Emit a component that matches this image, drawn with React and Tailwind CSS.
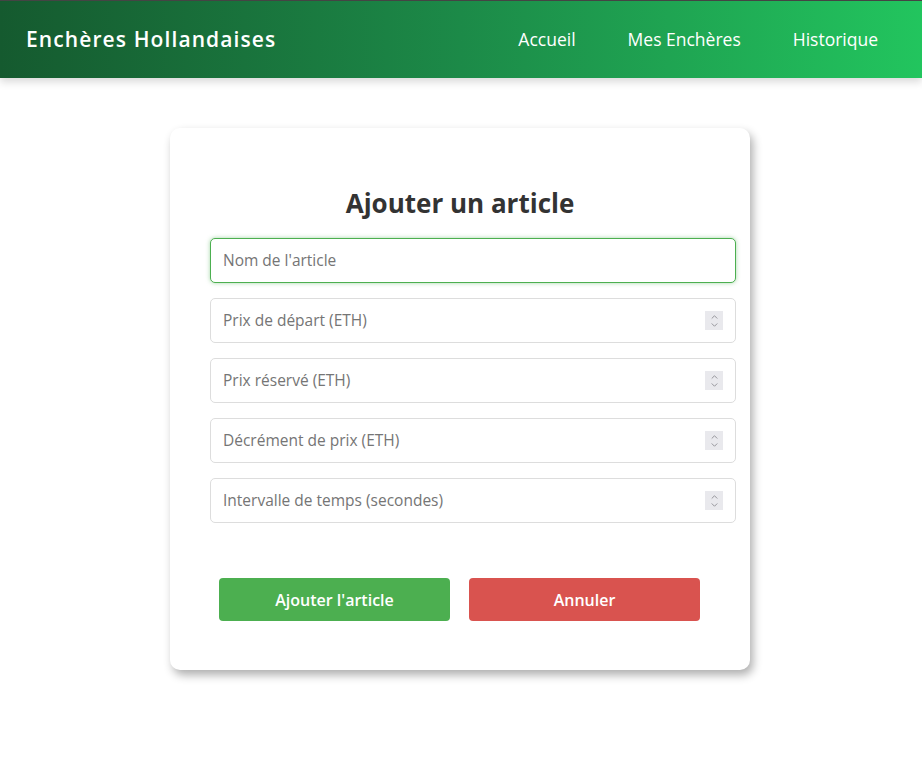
import { ChevronUp, ChevronDown } from 'lucide-react'

const fields = [
  { label: "Nom de l'article", number: false, focus: true },
  { label: 'Prix de départ (ETH)', number: true },
  { label: 'Prix réservé (ETH)', number: true },
  { label: 'Décrément de prix (ETH)', number: true },
  { label: 'Intervalle de temps (secondes)', number: true },
]

function Field({ label, number, focus }) {
  return (
    <div className="relative w-[526px]">
      <input
        type="text"
        placeholder={label}
        className={
          'w-full h-[45px] rounded-[5px] pl-[12px] pr-3 pb-[1px] text-[15.5px] text-[#333] placeholder:text-[#757575] outline-none bg-white ' +
          (focus
            ? 'border border-[#4caf50] shadow-[0_0_4px_rgba(76,175,80,0.5)]'
            : 'border border-[#ddd]')
        }
      />
      {number && (
        <div className="absolute right-[13px] top-[13px] w-[18px] h-[19px] bg-[#e9e9ed] flex flex-col items-center justify-center text-[#85858c]">
          <ChevronUp className="w-[13px] h-[10px] -mb-[2px]" strokeWidth={2} />
          <ChevronDown className="w-[13px] h-[10px]" strokeWidth={2} />
        </div>
      )}
    </div>
  )
}

export default function App() {
  return (
    <div className="min-h-[771px] bg-white" style={{ fontFamily: '"Open Sans", "Noto Sans", sans-serif' }}>
      {/* Header */}
      <header className="h-[78px] border-t border-[#444] bg-gradient-to-r from-[#155a2f] via-[#1c8a48] to-[#22c55e] flex items-center justify-between pl-[26px] pr-[44px] shadow-[0_4px_8px_rgba(0,0,0,0.15)] relative">
        <h1 className="text-white text-[21px] font-semibold tracking-[1.1px]">Enchères Hollandaises</h1>
        <nav className="flex gap-[52px] text-white text-[17.5px]">
          <a>Accueil</a>
          <a>Mes Enchères</a>
          <a>Historique</a>
        </nav>
      </header>

      <main className="flex justify-center pt-[50px] pr-[2px]">
        <div className="w-[580px] bg-white rounded-[10px] shadow-[3px_5px_10px_rgba(0,0,0,0.32)] pl-[40px] pt-[57px] pb-[49px]">
          <h2 className="text-center w-[500px] text-[26px] font-bold text-[#333] leading-[36px] mb-[17px]">Ajouter un article</h2>
          <form className="flex flex-col gap-[15px]">
            {fields.map((f) => (
              <Field key={f.label} {...f} />
            ))}
          </form>
          <div className="flex gap-[19px] pl-[9px] mt-[55px]">
            <button className="w-[231px] h-[43px] rounded-[4px] bg-[#4caf50] text-white font-semibold text-[16px]">Ajouter l'article</button>
            <button className="w-[231px] h-[43px] rounded-[4px] bg-[#d9534f] text-white font-semibold text-[16px]">Annuler</button>
          </div>
        </div>
      </main>
    </div>
  )
}
